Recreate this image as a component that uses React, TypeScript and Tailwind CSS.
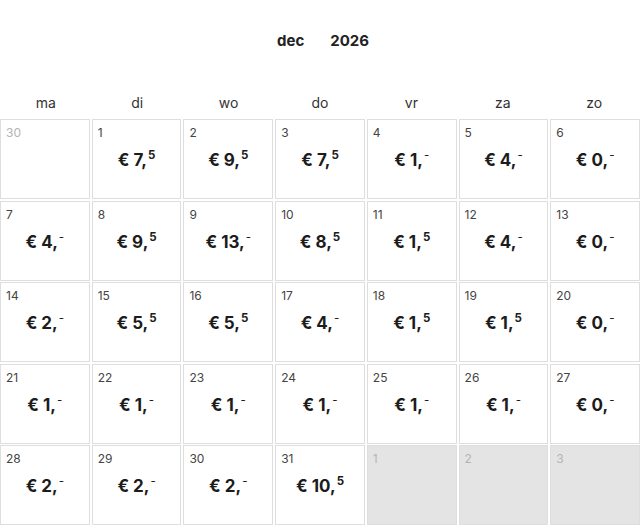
type Day = {
  n: number;
  price?: [number, string];
  outside?: "prev" | "next";
};

const days: Day[] = [
  { n: 30, outside: "prev" },
  { n: 1, price: [7, "5"] },
  { n: 2, price: [9, "5"] },
  { n: 3, price: [7, "5"] },
  { n: 4, price: [1, "-"] },
  { n: 5, price: [4, "-"] },
  { n: 6, price: [0, "-"] },
  { n: 7, price: [4, "-"] },
  { n: 8, price: [9, "5"] },
  { n: 9, price: [13, "-"] },
  { n: 10, price: [8, "5"] },
  { n: 11, price: [1, "5"] },
  { n: 12, price: [4, "-"] },
  { n: 13, price: [0, "-"] },
  { n: 14, price: [2, "-"] },
  { n: 15, price: [5, "5"] },
  { n: 16, price: [5, "5"] },
  { n: 17, price: [4, "-"] },
  { n: 18, price: [1, "5"] },
  { n: 19, price: [1, "5"] },
  { n: 20, price: [0, "-"] },
  { n: 21, price: [1, "-"] },
  { n: 22, price: [1, "-"] },
  { n: 23, price: [1, "-"] },
  { n: 24, price: [1, "-"] },
  { n: 25, price: [1, "-"] },
  { n: 26, price: [1, "-"] },
  { n: 27, price: [0, "-"] },
  { n: 28, price: [2, "-"] },
  { n: 29, price: [2, "-"] },
  { n: 30, price: [2, "-"] },
  { n: 31, price: [10, "5"] },
  { n: 1, outside: "next" },
  { n: 2, outside: "next" },
  { n: 3, outside: "next" },
];

const weekdays = ["ma", "di", "wo", "do", "vr", "za", "zo"];

function DayCell({ day }: { day: Day }) {
  const bg = day.outside === "next" ? "bg-[#e4e4e4]" : "bg-white";
  const numColor = day.outside ? "text-[#b4b4b4]" : "text-[#444]";
  return (
    <div className={`flex h-[80px] flex-col border border-[#dedede] pl-[5px] pt-[5px] ${bg}`}>
      <span className={`text-[12px] leading-4 ${numColor}`}>{day.n}</span>
      {day.price ? (
        <div className="mt-[9px] flex justify-center pr-[5px] text-[17px] font-bold leading-5 text-[#1c1c1c]">
          <span>€ {day.price[0]},</span>
          <sup className="-top-[1px] ml-[1px] text-[11.5px] leading-3">
            {day.price[1] === "-" ? <span className="font-normal">-</span> : day.price[1]}
          </sup>
        </div>
      ) : null}
    </div>
  );
}

export default function App() {
  return (
    <div className="h-[526px] w-[640px] overflow-hidden bg-white font-['Inter',sans-serif]">
      <div className="flex h-[82px] items-center justify-center gap-[26px] pl-[6px] text-[15px] font-bold text-[#222]">
        <span>dec</span>
        <span>2026</span>
      </div>
      <div className="grid h-[37px] grid-cols-7 items-center pt-[4px] text-center text-[14px] text-[#333]">
        {weekdays.map(w => (
          <span key={w}>{w}</span>
        ))}
      </div>
      <div className="grid grid-cols-7 gap-x-[2px] gap-y-[1.5px]">
        {days.map((d, i) => (
          <DayCell key={i} day={d} />
        ))}
      </div>
    </div>
  );
}
